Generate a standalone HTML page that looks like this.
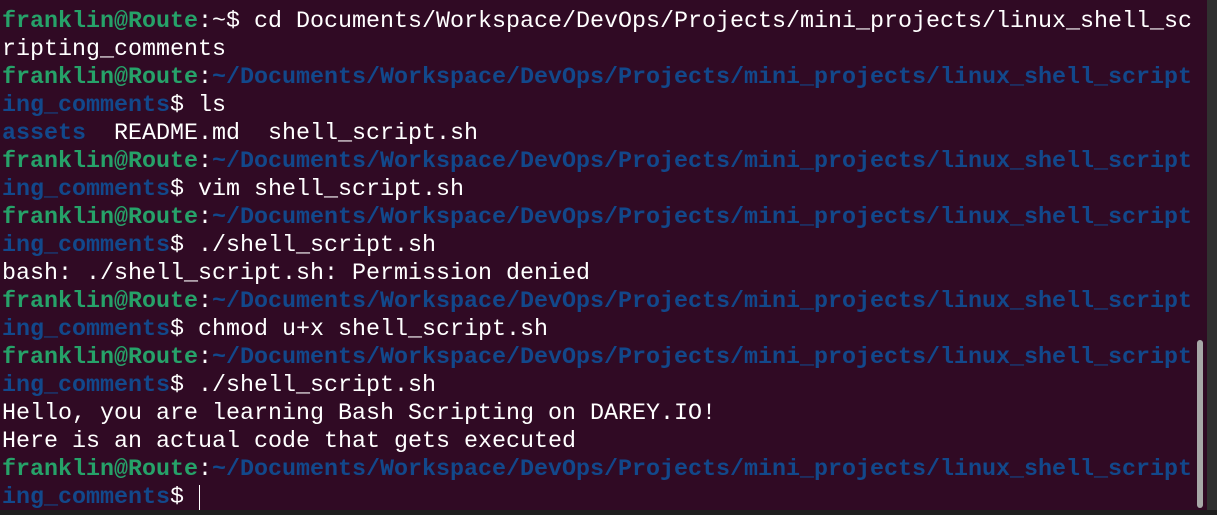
<!DOCTYPE html>
<html><head><style>
html,body{margin:0;padding:0;width:1217px;height:515px;overflow:hidden;background:#2b2b2b;}
#t{position:absolute;left:0;top:0;width:1207px;height:510px;background:#300a24;}
pre{position:absolute;left:2px;top:8px;margin:0;font-family:"Liberation Mono",monospace;font-size:23.33px;line-height:28px;color:#ffffff;white-space:pre;}
.g{color:#26a269;font-weight:bold}
.b{color:#12488b;font-weight:bold}
#sb{position:absolute;left:1197px;top:340px;width:6px;height:168px;background:#a8a8a8;border-radius:3px;}
#side{position:absolute;left:1207px;top:0;width:10px;height:515px;background:#303030;}
#bot{position:absolute;left:0;top:510px;width:1217px;height:5px;background:#1f1f1f;}
#cur{position:absolute;left:199px;top:485px;width:1px;height:25px;background:#fff;}
</style></head><body>
<div id="t"></div><div id="side"></div><div id="bot"></div><div id="sb"></div>
<pre><span class="g">franklin@Route</span>:~$ cd Documents/Workspace/DevOps/Projects/mini_projects/linux_shell_sc
ripting_comments
<span class="g">franklin@Route</span>:<span class="b">~/Documents/Workspace/DevOps/Projects/mini_projects/linux_shell_script
ing_comments</span>$ ls
<span class="b">assets</span>  README.md  shell_script.sh
<span class="g">franklin@Route</span>:<span class="b">~/Documents/Workspace/DevOps/Projects/mini_projects/linux_shell_script
ing_comments</span>$ vim shell_script.sh
<span class="g">franklin@Route</span>:<span class="b">~/Documents/Workspace/DevOps/Projects/mini_projects/linux_shell_script
ing_comments</span>$ ./shell_script.sh
bash: ./shell_script.sh: Permission denied
<span class="g">franklin@Route</span>:<span class="b">~/Documents/Workspace/DevOps/Projects/mini_projects/linux_shell_script
ing_comments</span>$ chmod u+x shell_script.sh
<span class="g">franklin@Route</span>:<span class="b">~/Documents/Workspace/DevOps/Projects/mini_projects/linux_shell_script
ing_comments</span>$ ./shell_script.sh
Hello, you are learning Bash Scripting on DAREY.IO!
Here is an actual code that gets executed
<span class="g">franklin@Route</span>:<span class="b">~/Documents/Workspace/DevOps/Projects/mini_projects/linux_shell_script
ing_comments</span>$ </pre>
<div id="cur"></div>
</body></html>
